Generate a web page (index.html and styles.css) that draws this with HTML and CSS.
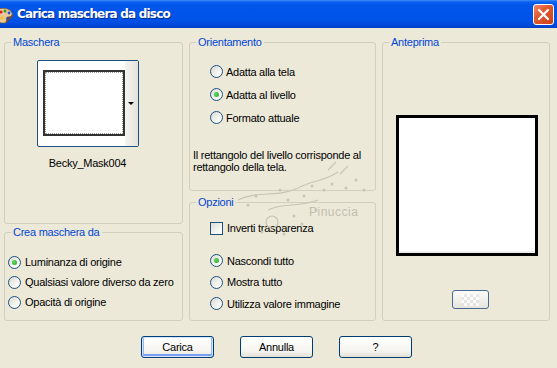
FILE: index.html
```html
<!DOCTYPE html>
<html lang="it">
<head>
    <meta charset="UTF-8">
    <title>Carica maschera da disco</title>
    <link rel="stylesheet" href="styles.css">
</head>
<body>
    <div class="window">
        <div class="titlebar">
            <svg class="app-icon" width="14" height="18" viewBox="0 0 14 18">
                <path d="M-4 4 C2 1 10 2 12 7 C13 10 10 11 8 11 C6 11 6 13 7 15 C7 17 3 18 -2 16 Z" fill="#e9c89a" stroke="#7a5a30" stroke-width="0.8"/>
                <circle cx="1" cy="6" r="1.6" fill="#e02020"/>
                <circle cx="5" cy="5" r="1.5" fill="#2a9a2a"/>
                <circle cx="9" cy="7" r="1.4" fill="#2050e0"/>
                <circle cx="2" cy="12" r="1.6" fill="#f0c020"/>
                <path d="M6 16 L13 9" stroke="#8a4a20" stroke-width="1.6"/>
            </svg>
            <span class="title">Carica maschera da disco</span>
            <button class="close-btn">
                <svg width="13" height="13" viewBox="0 0 13 13">
                    <path d="M2 2 L11 11 M11 2 L2 11" stroke="#fff" stroke-width="2.2" stroke-linecap="round"/>
                </svg>
            </button>
        </div>

        <div class="dialog">
            <div class="panels">
                <div class="col">
                    <fieldset class="group group-mask">
                        <legend>Maschera</legend>
                        <div class="mask-pick">
                            <div class="thumb-btn">
                                <div class="thumb"></div>
                                <div class="thumb-drop"><span class="arrow"></span></div>
                            </div>
                            <div class="mask-name">Becky_Mask004</div>
                        </div>
                    </fieldset>

                    <fieldset class="group group-source">
                        <legend>Crea maschera da</legend>
                        <div class="options tight">
                            <label class="opt"><span class="radio checked"></span>Luminanza di origine</label>
                            <label class="opt"><span class="radio"></span>Qualsiasi valore diverso da zero</label>
                            <label class="opt"><span class="radio"></span>Opacità di origine</label>
                        </div>
                    </fieldset>
                </div>

                <div class="col col-mid">
                    <fieldset class="group group-orient">
                        <legend>Orientamento</legend>
                        <div class="options indented">
                            <label class="opt tall"><span class="radio"></span>Adatta alla tela</label>
                            <label class="opt tall"><span class="radio checked"></span>Adatta al livello</label>
                            <label class="opt tall"><span class="radio"></span>Formato attuale</label>
                        </div>
                        <p class="hint">Il rettangolo del livello corrisponde al rettangolo della tela.</p>
                    </fieldset>

                    <fieldset class="group group-options">
                        <legend>Opzioni</legend>
                        <div class="options indented">
                            <label class="opt check-row"><span class="checkbox"></span>Inverti trasparenza</label>
                            <div class="radio-set">
                                <label class="opt"><span class="radio checked"></span>Nascondi tutto</label>
                                <label class="opt"><span class="radio"></span>Mostra tutto</label>
                                <label class="opt"><span class="radio"></span>Utilizza valore immagine</label>
                            </div>
                        </div>
                    </fieldset>
                </div>

                <div class="col">
                    <fieldset class="group group-preview">
                        <legend>Anteprima</legend>
                        <div class="preview-area">
                            <div class="preview-box"></div>
                            <button class="small-btn"><span class="checker"></span></button>
                        </div>
                    </fieldset>
                </div>
            </div>

            <div class="actions">
                <button class="btn default">Carica</button>
                <button class="btn">Annulla</button>
                <button class="btn">?</button>
            </div>

            <!-- watermark sitting over the middle panels -->
            <div class="watermark">
                <svg width="150" height="90" viewBox="0 0 150 90">
                    <g fill="none" stroke="#c9c5b6" stroke-width="1.2">
                        <path d="M10 40 C30 30 50 38 70 28 C85 20 95 22 110 12"/>
                        <path d="M40 50 C55 42 70 48 90 40"/>
                        <path d="M100 10 L108 2 M112 14 L120 6"/>
                        <circle cx="44" cy="62" r="6"/>
                    </g>
                    <g fill="#c9c5b6">
                        <circle cx="20" cy="45" r="1.5"/><circle cx="28" cy="36" r="1.5"/>
                        <circle cx="52" cy="30" r="1.5"/><circle cx="60" cy="40" r="1.5"/>
                        <circle cx="76" cy="36" r="1.5"/><circle cx="84" cy="26" r="1.5"/>
                        <circle cx="96" cy="30" r="1.5"/><circle cx="104" cy="24" r="1.5"/>
                        <circle cx="118" cy="28" r="1.5"/><circle cx="128" cy="20" r="1.5"/>
                        <circle cx="136" cy="30" r="1.5"/><circle cx="66" cy="56" r="1.5"/>
                        <circle cx="74" cy="64" r="1.5"/><circle cx="34" cy="72" r="1.5"/>
                        <circle cx="56" cy="74" r="1.5"/><circle cx="88" cy="50" r="1.5"/>
                    </g>
                </svg>
                <span class="wm-text">Pinuccia</span>
            </div>
        </div>
    </div>
</body>
</html>
```

FILE: styles.css
```css
* {
    margin: 0;
    padding: 0;
    box-sizing: border-box;
}

body {
    font-family: "Liberation Sans", Arial, sans-serif;
    font-size: 11px;
    letter-spacing: -0.25px;
    color: #000;
    background: #ece9d8;
    width: 557px;
    height: 368px;
    overflow: hidden;
}

.window {
    width: 557px;
    height: 368px;
    background: #ece9d8;
}

/* title bar */
.titlebar {
    height: 28px;
    display: flex;
    align-items: center;
    background: linear-gradient(#3d8ef7 0, #0a61ee 2px, #0055ea 5px, #0053e8 20px, #0049d9 25px, #003fc6 28px);
}

.app-icon {
    margin-top: 2px;
    flex: none;
}

.title {
    margin-left: 3px;
    color: #fff;
    font-family: "DejaVu Sans", sans-serif;
    font-weight: bold;
    font-size: 12px;
    letter-spacing: -0.8px;
    text-shadow: 1px 1px 0 #0a2a8a;
    flex: 1;
}

.close-btn {
    width: 21px;
    height: 21px;
    margin-right: 3px;
    margin-top: 1px;
    border: 1px solid #fff;
    border-radius: 3px;
    background: linear-gradient(135deg, #f08a68 0%, #e05a30 40%, #c8401a 100%);
    display: flex;
    align-items: center;
    justify-content: center;
}

/* dialog body */
.dialog {
    position: relative;
    padding: 8px 0 0 4px;
}

.panels {
    display: grid;
    grid-template-columns: 179px 187px 168px;
    column-gap: 6px;
}

.col {
    display: flex;
    flex-direction: column;
}

.col-mid {
    gap: 5px;
}

.col:first-child {
    gap: 2px;
}

.group {
    border: 1px solid #d0d0bf;
    border-radius: 3px;
    min-width: 0;
}

.group legend {
    margin-left: 6px;
    padding: 0 2px;
    color: #0046d5;
    line-height: 13px;
}

.group-mask { height: 188px; }
.group-source { height: 95px; }
.group-orient { height: 155px; }
.group-options { height: 125px; }
.group-preview { height: 285px; }

/* mask picker */
.mask-pick {
    display: flex;
    flex-direction: column;
    align-items: center;
    padding: 11px 12px 0 0;
}

.thumb-btn {
    width: 102px;
    height: 87px;
    border: 1px solid #1c5180;
    border-radius: 2px;
    background: #fff;
    display: flex;
}

.thumb {
    width: 83px;
    height: 66px;
    margin: 9px 0 0 5px;
    border: 2px solid #333;
    outline: 1px dotted #999;
    outline-offset: -3px;
    background: #fff;
}

.thumb-drop {
    margin-left: auto;
    width: 13px;
    background: linear-gradient(90deg, #f4f4f0, #e4e2da);
    display: flex;
    align-items: center;
    justify-content: center;
}

.arrow {
    width: 0;
    height: 0;
    border-left: 3px solid transparent;
    border-right: 3px solid transparent;
    border-top: 3px solid #000;
}

.mask-name {
    margin-top: 10px;
    line-height: 13px;
}

/* radios and checkboxes */
.options {
    display: flex;
    flex-direction: column;
}

.tight {
    padding: 13px 0 0 3px;
}

.indented {
    padding: 11px 0 0 20px;
}

.opt {
    display: flex;
    align-items: center;
    gap: 4px;
    height: 20px;
}

.opt.tall {
    height: 23px;
    gap: 3px;
}

.radio {
    width: 13px;
    height: 13px;
    border: 1px solid #1c5180;
    border-radius: 50%;
    background: linear-gradient(135deg, #dcdcd4 0%, #f4f4f0 60%, #fff 100%);
    flex: none;
    display: flex;
    align-items: center;
    justify-content: center;
}

.radio.checked::after {
    content: "";
    width: 5px;
    height: 5px;
    border-radius: 50%;
    background: radial-gradient(circle at 40% 40%, #63d863, #21a121);
}

.checkbox {
    width: 13px;
    height: 13px;
    border: 1px solid #1c5180;
    background: linear-gradient(135deg, #dcdcd4 0%, #f4f4f0 60%, #fff 100%);
    flex: none;
}

.hint {
    margin: 20px 0 0 3px;
    line-height: 12px;
    width: 180px;
}

.group-options .indented {
    padding-top: 6px;
}

.check-row {
    height: 26px;
    gap: 4px;
}

.radio-set {
    margin-top: 9px;
    display: flex;
    flex-direction: column;
}

.radio-set .opt {
    height: 21.5px;
}

/* preview */
.preview-area {
    display: flex;
    flex-direction: column;
    align-items: center;
    padding: 66px 0 0 2px;
}

.preview-box {
    width: 142px;
    height: 141px;
    border: 3px solid #000;
    background: #fff;
    box-shadow: inset 0 -2px 0 #eee;
}

.small-btn {
    margin-top: 34px;
    width: 37px;
    height: 19px;
    border: 1px solid #4a6a96;
    border-radius: 3px;
    background: linear-gradient(#fbfbf9, #e6e4dc);
    display: flex;
    align-items: center;
    justify-content: center;
    margin-left: 6px;
}

.checker {
    width: 18px;
    height: 12px;
    background:
        linear-gradient(45deg, #e4e4e4 25%, transparent 25%, transparent 75%, #e4e4e4 75%),
        linear-gradient(45deg, #e4e4e4 25%, #fff 25%, #fff 75%, #e4e4e4 75%);
    background-size: 6px 6px;
    background-position: 0 0, 3px 3px;
    opacity: 0.8;
}

/* buttons */
.actions {
    display: flex;
    gap: 26px;
    padding-left: 137px;
    margin-top: 15px;
}

.btn {
    width: 73px;
    height: 22px;
    border: 1px solid #003c74;
    border-radius: 3px;
    background: linear-gradient(#ffffff 0%, #f5f4ef 70%, #e3e0d6 100%);
    font-family: "Liberation Sans", Arial, sans-serif;
    font-size: 11px;
    letter-spacing: -0.25px;
    color: #000;
}

.btn.default {
    box-shadow: inset 0 0 0 1px #cee7ff, inset 0 -2px 0 1px #7d9ff0, inset 1px 0 0 1px #98b8f5, inset -1px 0 0 1px #98b8f5;
}

/* watermark */
.watermark {
    position: absolute;
    left: 228px;
    top: 132px;
    width: 150px;
    height: 90px;
    pointer-events: none;
}

.wm-text {
    position: absolute;
    left: 81px;
    top: 45px;
    color: #c2beb0;
    font-size: 12px;
    letter-spacing: 0.5px;
}
```
